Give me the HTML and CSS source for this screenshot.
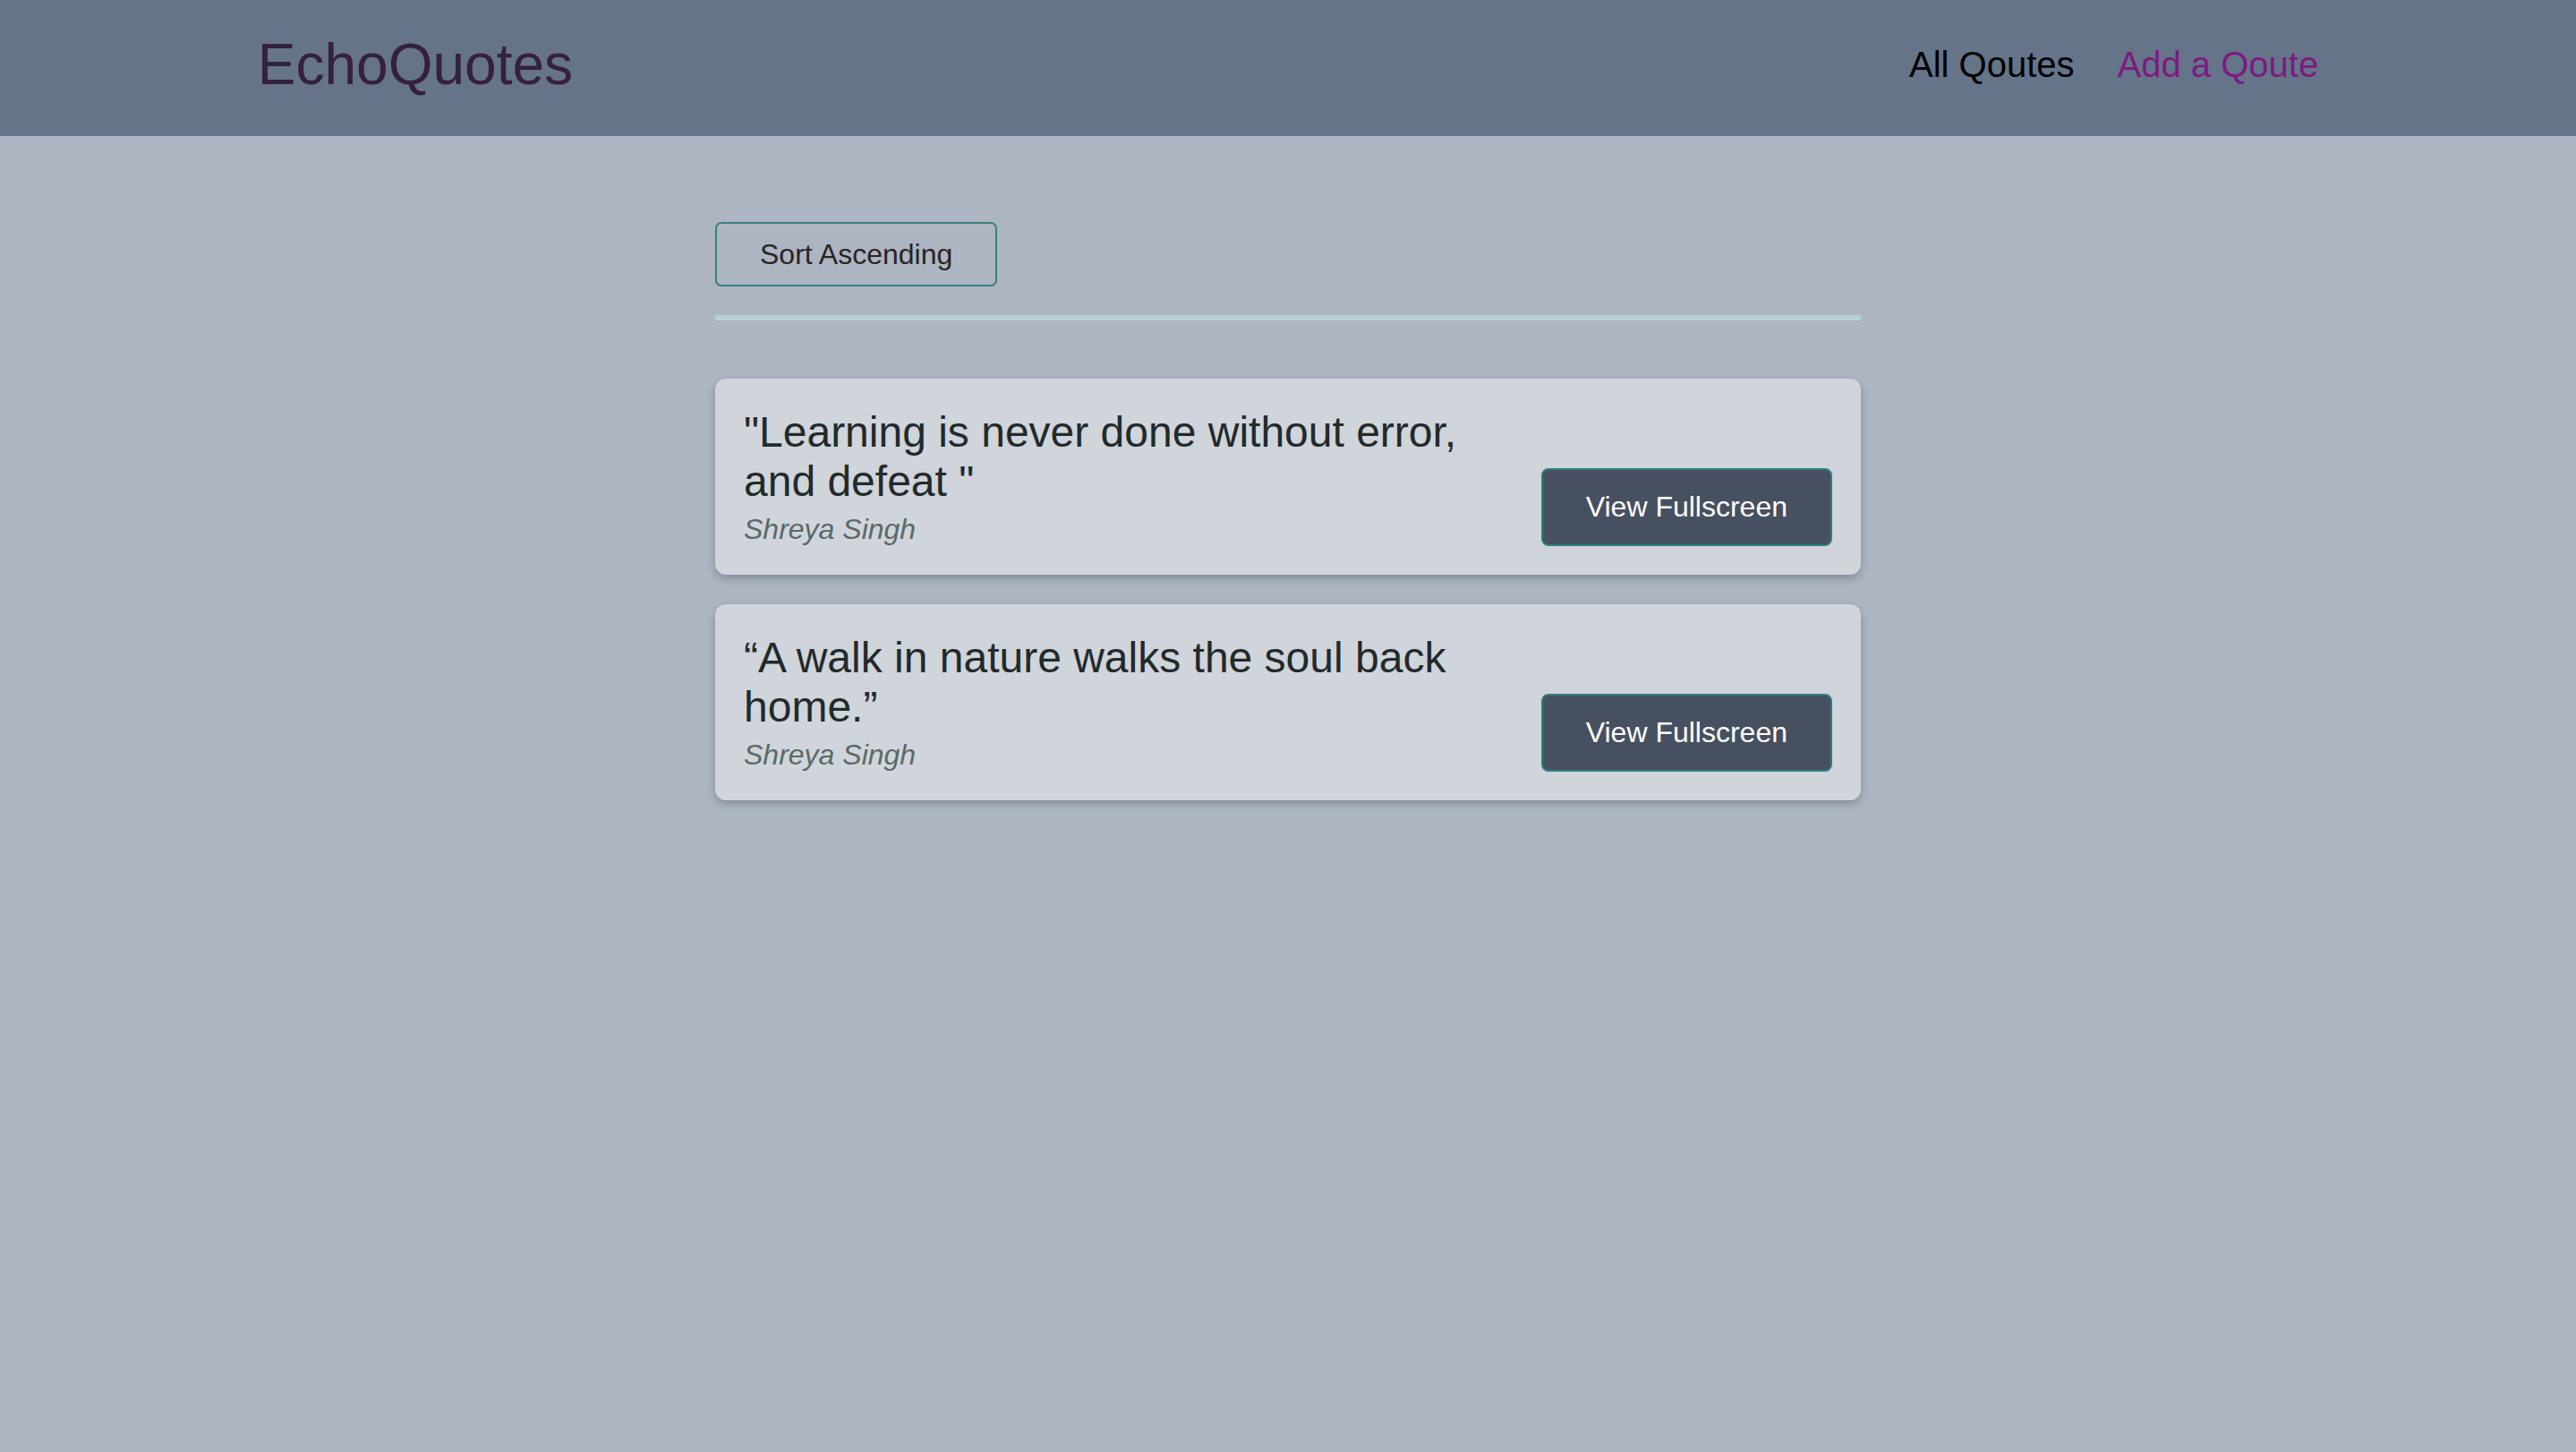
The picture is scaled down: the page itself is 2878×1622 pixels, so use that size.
FILE: index.html
```html
<!DOCTYPE html>
<html lang="en">
<head>
<meta charset="utf-8">
<title>EchoQuotes</title>
<link rel="stylesheet" href="styles.css">
</head>
<body>
<header class="header">
  <div class="header-inner">
    <div class="logo">EchoQuotes</div>
    <nav class="nav">
      <a class="nav-link" href="#">All Qoutes</a>
      <a class="nav-link nav-link-active" href="#">Add a Qoute</a>
    </nav>
  </div>
</header>
<main class="main">
  <div class="sorting">
    <button class="sort-btn">Sort Ascending</button>
  </div>
  <hr class="divider">
  <ul class="list">
    <li class="card">
      <figure class="quote">
        <blockquote class="quote-text">"Learning is never done without error, and defeat "</blockquote>
        <figcaption class="quote-author">Shreya Singh</figcaption>
      </figure>
      <button class="view-btn">View Fullscreen</button>
    </li>
    <li class="card">
      <figure class="quote">
        <blockquote class="quote-text">“A walk in nature walks the soul back home.”</blockquote>
        <figcaption class="quote-author">Shreya Singh</figcaption>
      </figure>
      <button class="view-btn">View Fullscreen</button>
    </li>
  </ul>
</main>
</body>
</html>
```
FILE: styles.css
```css
* { box-sizing: border-box; }
html, body {
  margin: 0;
  padding: 0;
}
body {
  min-height: 100vh;
  background: #acb5c1;
  font-family: Helvetica, "Liberation Sans", Arial, sans-serif;
}
.header {
  height: 152px;
  background: #657489;
}
.header-inner {
  width: 80%;
  height: 100%;
  margin: 0 auto;
  display: flex;
  align-items: center;
  justify-content: space-between;
}
.logo {
  font-size: 64px;
  color: #35203d;
  margin-bottom: 8px;
}
.nav {
  display: flex;
  gap: 48px;
  margin-bottom: 8px;
}
.nav-link {
  font-size: 40px;
  color: #000;
  text-decoration: none;
}
.nav-link-active {
  color: #7d1a80;
}
.main {
  width: 1280px;
  margin: 0 auto;
  padding-top: 96px;
}
.sorting {
  display: flex;
}
.sort-btn {
  font: inherit;
  font-size: 32px;
  line-height: 36px;
  color: #2b2424;
  background: transparent;
  border: 2px solid #3a7f80;
  border-radius: 7px;
  padding: 16px 48px;
}
.divider {
  margin: 32px 0 65px;
  border: 0;
  height: 6px;
  background: #b6d3d1;
}
.list {
  list-style: none;
  margin: 0;
  padding: 0;
  display: flex;
  flex-direction: column;
  gap: 33px;
}
.card {
  display: flex;
  align-items: flex-end;
  gap: 32px;
  padding: 32px;
  background: #d0d4db;
  border-radius: 12px;
  box-shadow: 0 4px 8px rgba(40, 50, 70, 0.3);
}
.quote {
  flex: 1;
  margin: 0;
}
.quote-text {
  margin: 0;
  font-size: 48px;
  line-height: 55px;
  color: #222a2a;
}
.quote-author {
  margin-top: 8px;
  font-size: 32px;
  line-height: 37px;
  font-style: italic;
  color: #5a6968;
}
.view-btn {
  font: inherit;
  font-size: 32px;
  line-height: 37px;
  color: #fff;
  background: #475060;
  border: 2px solid #2f7f7a;
  border-radius: 8px;
  padding: 23px 48px;
}
```
